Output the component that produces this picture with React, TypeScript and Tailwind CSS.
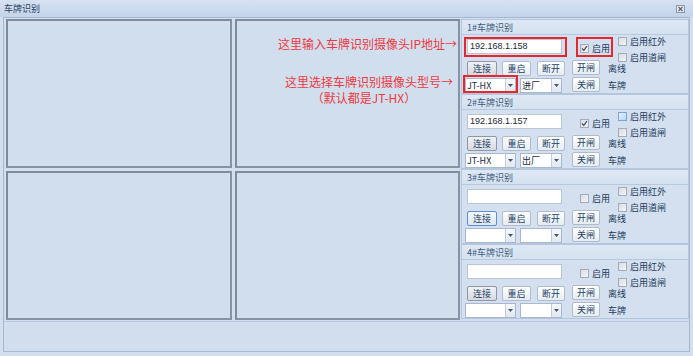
import React from 'react';

type Group = {
  no: number;
  ip: string;
  enabled: boolean;
  model: string;
  dir: string;
  focused?: boolean;
  highlight?: boolean;
};

const groups: Group[] = [
  { no: 1, ip: '192.168.1.158', enabled: true, model: 'JT-HX', dir: '进厂', highlight: true },
  { no: 2, ip: '192.168.1.157', enabled: true, model: 'JT-HX', dir: '出厂' },
  { no: 3, ip: '', enabled: false, model: '', dir: '', focused: true },
  { no: 4, ip: '', enabled: false, model: '', dir: '' },
];

function Btn({ label, w, primary, focused }: { label: string; w: string; primary?: boolean; focused?: boolean }) {
  const tone = focused
    ? 'border-[#5d8ed0] from-[#f4f8fd] to-[#dde8f5]'
    : primary
      ? 'border-[#8e97a3] from-[#f1f2f4] to-[#d6dae0]'
      : 'border-[#b0bccb] from-[#ffffff] to-[#e6ecf3]';
  return (
    <div className={`${w} h-[15px] shrink-0 flex items-center justify-center rounded-[2px] border bg-gradient-to-b ${tone} text-[9px] text-[#233f66] leading-none whitespace-nowrap`}>
      {label}
    </div>
  );
}

function Check({ checked, tint }: { checked?: boolean; tint?: boolean }) {
  return (
    <div
      className={`w-[9px] h-[9px] shrink-0 border flex items-center justify-center ${
        tint ? 'border-[#7aa6d8] bg-gradient-to-br from-[#e6f1fc] to-[#b8d4f2]' : 'border-[#a3adba] bg-gradient-to-br from-[#d9dde3] to-[#f4f5f7]'
      }`}
    >
      {checked && (
        <svg width="7" height="7" viewBox="0 0 7 7">
          <path d="M1 3.5 L2.8 5.3 L6 1.2" stroke="#3c4656" strokeWidth="1.1" fill="none" />
        </svg>
      )}
    </div>
  );
}

function Combo({ w, value }: { w: string; value: string }) {
  return (
    <div className={`${w} h-[15px] shrink-0 flex border border-[#a9b9cd] bg-white`}>
      <div className="flex-1 flex items-center pl-[1px] text-[9px] text-[#1c2a3c] leading-none overflow-hidden whitespace-nowrap">{value}</div>
      <div className="w-[10px] shrink-0 border-l border-[#c2cedc] bg-gradient-to-b from-[#f6f8fb] to-[#e1e8f1] flex items-center justify-center">
        <svg width="5" height="3" viewBox="0 0 5 3">
          <path d="M0 0 H5 L2.5 3 Z" fill="#4a5566" />
        </svg>
      </div>
    </div>
  );
}

function CameraGroup({ g }: { g: Group }) {
  return (
    <div className="relative h-[75px] shrink-0 border border-[#b3c6de] bg-[#d4e0ef] flex flex-col">
      {/* header */}
      <div className="h-[15px] shrink-0 flex items-center px-[5px] border-b border-[#b6c9e0] bg-gradient-to-b from-[#dfe8f4] to-[#d5e1f0] text-[9px] text-[#3d5a7e] leading-none">
        {g.no}#车牌识别
      </div>

      <div className="flex">
        {/* left col */}
        <div className="w-[110px] shrink-0 pl-[3px] flex flex-col">
          <div className="ml-[2px] mt-[4px] w-[95px] h-[15px] bg-white border border-[#b8c6d6] flex items-center pl-[2px] text-[9px] font-['Liberation_Sans',sans-serif] text-[#1c2838] leading-none">
            {g.ip}
          </div>
          <div className="ml-[2px] mt-[7px] flex">
            <Btn label="连接" w="w-[30px]" primary focused={g.focused} />
            <div className="ml-[5px]"><Btn label="重启" w="w-[29px]" /></div>
            <div className="ml-[6px]"><Btn label="断开" w="w-[28px]" /></div>
          </div>
          <div className="mt-[2px] flex">
            <Combo w="w-[51px]" value={g.model} />
            <div className="ml-[4px]"><Combo w="w-[42px]" value={g.dir} /></div>
          </div>
        </div>

        {/* middle col */}
        <div className="w-[36px] shrink-0 flex flex-col">
          <div className="mt-[7px] h-[12px] flex items-center pl-[8px] gap-[3px] whitespace-nowrap">
            <Check checked={g.enabled} />
            <span className="text-[9px] text-[#223a5c] leading-none">启用</span>
          </div>
          <div className="mt-[6px]"><Btn label="开闸" w="w-[28px]" /></div>
          <div className="mt-[2px]"><Btn label="关闸" w="w-[28px]" /></div>
        </div>

        {/* right col */}
        <div className="flex-1 flex flex-col">
          <div className="h-[12px] flex items-center pl-[10px] gap-[3px] whitespace-nowrap">
            <Check tint={g.no === 2} />
            <span className="text-[9px] text-[#223a5c] leading-none">启用红外</span>
          </div>
          <div className="mt-[4px] h-[12px] flex items-center pl-[10px] gap-[3px] whitespace-nowrap">
            <Check />
            <span className="text-[9px] text-[#223a5c] leading-none">启用道闸</span>
          </div>
          <div className="h-[10px] flex items-center text-[9px] text-[#223a5c] leading-none">离线</div>
          <div className="mt-[5px] h-[14px] flex items-center text-[9px] text-[#223a5c] leading-none">车牌</div>
        </div>
      </div>

      {g.highlight && (
        <>
          <div className="absolute left-[2px] top-[17px] w-[103px] h-[20px] border-2 border-[#e8262b]" />
          <div className="absolute left-[114px] top-[17px] w-[37px] h-[20px] border-2 border-[#e8262b]" />
          <div className="absolute left-[1px] top-[55px] w-[55px] h-[18px] border-2 border-[#e8262b]" />
        </>
      )}
    </div>
  );
}

function Panel({ children }: { children?: React.ReactNode }) {
  return (
    <div className="border-2 border-t-[#7f8b9c] border-l-[#7f8b9c] border-r-[#8793a3] border-b-[#8793a3] bg-[#d1deee] flex flex-col">
      {children}
    </div>
  );
}

export default function App() {
  return (
    <div className="w-[693px] h-[356px] overflow-hidden bg-[#d3dfee] flex flex-col font-['Noto_Sans_CJK_SC',sans-serif]">
      {/* title bar */}
      <div className="h-[17px] shrink-0 flex items-center justify-between pl-[4px] pr-[8px] bg-gradient-to-b from-[#d6e2f2] to-[#c3d4ea]">
        <span className="text-[9px] text-[#2a3f5e] leading-none">车牌识别</span>
        <svg width="9" height="8" viewBox="0 0 9 8">
          <rect x="0.5" y="0.5" width="8" height="7" fill="#e4e9ef" stroke="#8e98a6" />
          <path d="M2.5 2 L6.5 6 M6.5 2 L2.5 6" stroke="#5d6878" strokeWidth="1.2" />
        </svg>
      </div>

      {/* frame */}
      <div className="flex-1 mx-[3px] mb-[4px] border border-[#a6b9d1] flex flex-col">
        <div className="flex pt-[1px]">
          <div className="ml-[1px] w-[454px] pl-[1px] grid grid-cols-[226px_225px] grid-rows-[149px_149px] gap-[3px] bg-[#d3dfee]">
            <Panel />
            <Panel>
              <div className="mt-[16px] flex flex-col items-end text-[12px] text-[#ec3b3f] leading-[14px] whitespace-nowrap">
                <div className="pr-[1px]">这里输入车牌识别摄像头IP地址→</div>
                <div className="mt-[24px] pr-[5px] flex flex-col items-center">
                  <div>这里选择车牌识别摄像头型号→</div>
                  <div className="mt-[2px] pr-[10px]">（默认都是JT-HX）</div>
                </div>
              </div>
            </Panel>
            <Panel />
            <Panel />
          </div>
          <div className="ml-[2px] flex-1 flex flex-col">
            {groups.map((g) => (
              <CameraGroup key={g.no} g={g} />
            ))}
          </div>
        </div>
        <div className="flex-1 mt-[1px] border-t border-[#b9cae0] bg-[#d2deee]" />
      </div>
    </div>
  );
}
